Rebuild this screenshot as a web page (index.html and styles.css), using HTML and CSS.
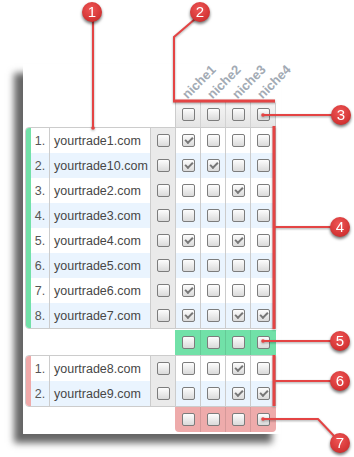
FILE: index.html
```html
<!DOCTYPE html>
<html lang="en">
<head>
  <meta charset="UTF-8" />
  <title>Niche assignment</title>
  <link rel="stylesheet" href="styles.css">
</head>
<body>
  <div class="panel">
    <div class="labels">
      <div class="label"><span>niche1</span></div>
      <div class="label"><span>niche2</span></div>
      <div class="label"><span>niche3</span></div>
      <div class="label"><span>niche4</span></div>
    </div>

    <div class="head">
      <div class="cell"><i class="cb"></i></div>
      <div class="cell"><i class="cb"></i></div>
      <div class="cell"><i class="cb"></i></div>
      <div class="cell"><i class="cb"></i></div>
    </div>

    <div class="group green">
      <div class="row">
        <div class="bar"></div><div class="num">1.</div><div class="dom">yourtrade1.com</div>
        <div class="pick"><i class="cb"></i></div>
        <div class="niche"><i class="cb on"></i></div><div class="niche"><i class="cb"></i></div><div class="niche"><i class="cb"></i></div><div class="niche"><i class="cb"></i></div>
      </div>
      <div class="row">
        <div class="bar"></div><div class="num">2.</div><div class="dom">yourtrade10.com</div>
        <div class="pick"><i class="cb"></i></div>
        <div class="niche"><i class="cb on"></i></div><div class="niche"><i class="cb on"></i></div><div class="niche"><i class="cb"></i></div><div class="niche"><i class="cb"></i></div>
      </div>
      <div class="row">
        <div class="bar"></div><div class="num">3.</div><div class="dom">yourtrade2.com</div>
        <div class="pick"><i class="cb"></i></div>
        <div class="niche"><i class="cb"></i></div><div class="niche"><i class="cb"></i></div><div class="niche"><i class="cb on"></i></div><div class="niche"><i class="cb"></i></div>
      </div>
      <div class="row">
        <div class="bar"></div><div class="num">4.</div><div class="dom">yourtrade3.com</div>
        <div class="pick"><i class="cb"></i></div>
        <div class="niche"><i class="cb"></i></div><div class="niche"><i class="cb"></i></div><div class="niche"><i class="cb"></i></div><div class="niche"><i class="cb"></i></div>
      </div>
      <div class="row">
        <div class="bar"></div><div class="num">5.</div><div class="dom">yourtrade4.com</div>
        <div class="pick"><i class="cb"></i></div>
        <div class="niche"><i class="cb on"></i></div><div class="niche"><i class="cb"></i></div><div class="niche"><i class="cb on"></i></div><div class="niche"><i class="cb"></i></div>
      </div>
      <div class="row">
        <div class="bar"></div><div class="num">6.</div><div class="dom">yourtrade5.com</div>
        <div class="pick"><i class="cb"></i></div>
        <div class="niche"><i class="cb"></i></div><div class="niche"><i class="cb"></i></div><div class="niche"><i class="cb"></i></div><div class="niche"><i class="cb"></i></div>
      </div>
      <div class="row">
        <div class="bar"></div><div class="num">7.</div><div class="dom">yourtrade6.com</div>
        <div class="pick"><i class="cb"></i></div>
        <div class="niche"><i class="cb on"></i></div><div class="niche"><i class="cb"></i></div><div class="niche"><i class="cb"></i></div><div class="niche"><i class="cb"></i></div>
      </div>
      <div class="row">
        <div class="bar"></div><div class="num">8.</div><div class="dom">yourtrade7.com</div>
        <div class="pick"><i class="cb"></i></div>
        <div class="niche"><i class="cb on"></i></div><div class="niche"><i class="cb"></i></div><div class="niche"><i class="cb on"></i></div><div class="niche"><i class="cb on"></i></div>
      </div>
    </div>

    <div class="foot foot-green">
      <div class="cell"><i class="cb"></i></div>
      <div class="cell"><i class="cb"></i></div>
      <div class="cell"><i class="cb"></i></div>
      <div class="cell"><i class="cb"></i></div>
    </div>

    <div class="group pink">
      <div class="row">
        <div class="bar"></div><div class="num">1.</div><div class="dom">yourtrade8.com</div>
        <div class="pick"><i class="cb"></i></div>
        <div class="niche"><i class="cb"></i></div><div class="niche"><i class="cb"></i></div><div class="niche"><i class="cb on"></i></div><div class="niche"><i class="cb"></i></div>
      </div>
      <div class="row">
        <div class="bar"></div><div class="num">2.</div><div class="dom">yourtrade9.com</div>
        <div class="pick"><i class="cb"></i></div>
        <div class="niche"><i class="cb"></i></div><div class="niche"><i class="cb"></i></div><div class="niche"><i class="cb on"></i></div><div class="niche"><i class="cb on"></i></div>
      </div>
    </div>

    <div class="foot foot-pink">
      <div class="cell"><i class="cb"></i></div>
      <div class="cell"><i class="cb"></i></div>
      <div class="cell"><i class="cb"></i></div>
      <div class="cell"><i class="cb"></i></div>
    </div>
  </div>

  <!-- callouts drawn over the screenshot -->
  <svg class="callouts" width="354" height="457" viewBox="0 0 354 457">
    <g class="lines">
      <line x1="93" y1="20" x2="93" y2="128" />
      <polyline points="195,19 174,37 174,101" />
      <line x1="173" y1="101" x2="275" y2="101" class="thick" />
      <line x1="263" y1="115" x2="333" y2="115" />
      <line x1="274" y1="126" x2="274" y2="329" class="thick" />
      <line x1="274" y1="227" x2="332" y2="227" />
      <line x1="263" y1="341" x2="332" y2="341" />
      <line x1="274" y1="355" x2="274" y2="406" class="thick" />
      <line x1="274" y1="381" x2="332" y2="381" />
      <polyline points="263,419 318,419 336,438" />
      <circle cx="93" cy="128" r="1.8" />
      <circle cx="263" cy="115" r="1.8" />
      <circle cx="263" cy="341" r="1.8" />
      <circle cx="263" cy="419" r="1.8" />
    </g>
    <defs>
      <radialGradient id="red" cx="45%" cy="35%" r="65%">
        <stop offset="0" stop-color="#ef5656" />
        <stop offset="1" stop-color="#cf2f2f" />
      </radialGradient>
    </defs>
    <g class="badges">
      <circle cx="92" cy="12" r="10" /><text x="92" y="17">1</text>
      <circle cx="200" cy="12" r="10" /><text x="200" y="17">2</text>
      <circle cx="341" cy="115" r="10" /><text x="341" y="120">3</text>
      <circle cx="340" cy="227" r="10" /><text x="340" y="232">4</text>
      <circle cx="340" cy="341" r="10" /><text x="340" y="346">5</text>
      <circle cx="340" cy="381" r="10" /><text x="340" y="386">6</text>
      <circle cx="340" cy="443" r="10" /><text x="340" y="448">7</text>
    </g>
  </svg>
</body>
</html>
```

FILE: styles.css
```css
* {
  box-sizing: border-box;
  margin: 0;
  padding: 0;
}
body {
  font-family: 'Liberation Sans', Arial, sans-serif;
  font-size: 12px;
  background: #fff;
  color: #444;
  width: 354px;
  height: 457px;
  overflow: hidden;
  position: relative;
}
.panel {
  margin: 64px 0 0 23px;
  width: 258px;
  padding: 0 0 2px 2px;
  background: #fff;
  box-shadow: -9px 9px 7px rgba(0, 0, 0, 0.6);
}

/* rotated column titles */
.labels {
  display: flex;
  height: 37px;
  margin-left: 150px;
}
.label {
  flex: none;
  width: 25px;
  display: flex;
  align-items: flex-end;
  padding: 0 0 0 14px;
}
.label span {
  flex: none;
  display: inline-block;
  white-space: nowrap;
  font-weight: bold;
  font-size: 13px;
  line-height: 12px;
  color: #a2aab4;
  transform: rotate(-45deg);
  transform-origin: 0 100%;
}

.head, .foot {
  display: flex;
  margin-left: 150px;
  width: 101px;
  height: 26px;
  border: 1px solid #ccc;
  border-bottom: 0;
}
.head {
  border-radius: 0 4px 0 0;
  background: linear-gradient(#f6f6f6, #e4e4e4);
}
.head .cell, .foot .cell {
  flex: none;
  width: 25px;
  display: flex;
  align-items: center;
  justify-content: center;
  border-left: 1px solid #d2d2d2;
}
.head .cell:first-child, .foot .cell:first-child {
  width: 24px;
  border-left: 0;
}
.foot {
  height: 25px;
  border: 0;
  padding-left: 1px;
}
.foot .cell {
  border-left-color: rgba(0, 0, 0, 0.1);
}
.foot-green {
  margin-top: 1px;
  background: #71e1a8;
}
.foot-pink {
  background: #eeabab;
  border-radius: 0 0 4px 4px;
}

/* domain groups */
.group {
  width: 251px;
  border: 1px solid #ccc;
  border-radius: 4px 0 0 4px;
  overflow: hidden;
}
.row {
  display: flex;
  height: 25px;
  align-items: stretch;
}
.row:nth-child(even) {
  background: #eaf4fe;
}
.row > div {
  flex: none;
  display: flex;
  align-items: center;
}
.bar {
  width: 5px;
}
.green .bar { background: #71e1a8; }
.pink .bar { background: #f0a9a9; }
.num {
  width: 18px;
  justify-content: center;
  color: #555;
  font-size: 12.5px;
}
.dom {
  width: 101px;
  padding-left: 4px;
  border-left: 1px solid #ccc;
  color: #474747;
  font-size: 12.5px;
}
.pick, .niche {
  width: 25px;
  justify-content: center;
  border-left: 1px solid #ccc;
}
.pick {
  background: #eaeaea;
}

/* checkboxes */
.cb {
  display: block;
  position: relative;
  width: 13px;
  height: 13px;
  border: 1px solid #7c7c7c;
  border-radius: 2px;
  background: linear-gradient(#fdfdfd, #dadada);
}
.cb.on::after {
  content: "";
  position: absolute;
  left: 2px;
  top: 2px;
  width: 6px;
  height: 3px;
  border-left: 2px solid #777;
  border-bottom: 2px solid #777;
  transform: rotate(-45deg);
}

/* annotation overlay */
.callouts {
  position: absolute;
  left: 0;
  top: 0;
  pointer-events: none;
}
.lines {
  stroke: #e44444;
  stroke-width: 2;
  fill: none;
  filter: drop-shadow(0 1px 1px rgba(0, 0, 0, 0.35));
}
.lines .thick {
  stroke-width: 3;
}
.lines circle {
  fill: #e44444;
  stroke: none;
}
.badges {
  filter: drop-shadow(0 2px 1.5px rgba(0, 0, 0, 0.55));
}
.badges circle {
  fill: url(#red);
}
.badges text {
  fill: #fff;
  font-family: 'Liberation Sans', Arial, sans-serif;
  font-size: 15px;
  text-anchor: middle;
}
```
